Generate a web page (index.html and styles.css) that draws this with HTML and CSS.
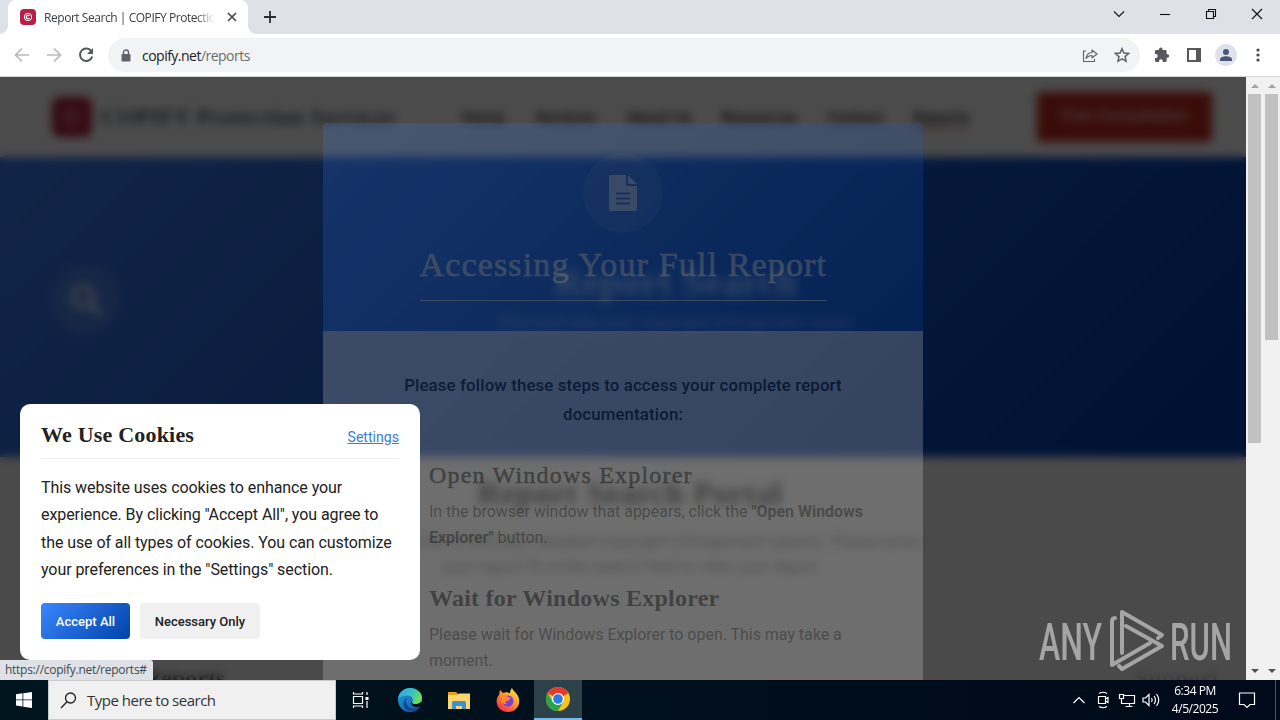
FILE: index.html
```
<!DOCTYPE html>
<html lang="en">
<head>
    <meta charset="UTF-8">
    <meta name="viewport" content="width=device-width, initial-scale=1.0">
    <title>Report Search | COPIFY Protection Services</title>
    <link rel="stylesheet" href="styles.css">
</head>
<body>
    <div class="window">
        <!-- Tabs -->
        <div class="tab-strip">
            <div class="tab">
                <span class="favicon"><svg width="16" height="16" viewBox="0 0 16 16" fill="none" stroke="#fff"><circle cx="8" cy="8" r="3.7" stroke-width="1"/><path d="M9.4 7a1.7 1.7 0 1 0 0 2" stroke-width="1.2"/></svg></span>
                <span class="tab-title">Report Search | COPIFY Protection</span>
                <svg class="tab-close" width="10" height="10" viewBox="0 0 10 10" stroke="#45494d" stroke-width="1.7"><path d="M1 1l8 8M9 1L1 9"/></svg>
            </div>
            <svg class="new-tab" width="12" height="12" viewBox="0 0 12 12" stroke="#2b2e33" stroke-width="1.8"><path d="M6 0v12M0 6h12"/></svg>
            <div class="window-controls">
                <svg width="46" height="28" viewBox="0 0 46 28"><path d="M18 11.5l5 5 5-5"/></svg>
                <svg width="46" height="28" viewBox="0 0 46 28"><path d="M18 14.5h10"/></svg>
                <svg width="46" height="28" viewBox="0 0 46 28"><path d="M18.500 11.500h7v7h-7zM20.500 11.500v-2h7v7h-2"/></svg>
                <svg width="46" height="28" viewBox="0 0 46 28"><path d="M18 9l10 10M28 9L18 19"/></svg>
            </div>
        </div>

        <!-- Address bar -->
        <div class="toolbar">
            <div class="nav-icons">
                <svg width="16" height="16" viewBox="0 0 16 16" fill="none" stroke="#b8babd" stroke-width="1.7"><path d="M15 8H2M8 1.500L1.500 8 8 14.500"/></svg>
                <svg width="16" height="16" viewBox="0 0 16 16" fill="none" stroke="#b8babd" stroke-width="1.700"><path d="M1 8h13M8 1.500L14.500 8 8 14.500"/></svg>
                <svg width="16" height="16" viewBox="0 0 16 16" fill="none" stroke="#55595d" stroke-width="2"><path d="M13.300 4.200A6.200 6.200 0 1 0 14.200 9.500"/><path d="M15 1v6H9z" fill="#55595d" stroke="none"/></svg>
            </div>
            <div class="omnibox">
                <svg width="10" height="13" viewBox="0 0 10 13"><rect x="0.500" y="5" width="9" height="7.500" rx="1" fill="#5f6368"/><path d="M2.500 5.500V3.500a2.500 2.500 0 0 1 5 0v2" fill="none" stroke="#5f6368" stroke-width="1.400"/></svg>
                <span class="url">copify.net<span>/reports</span></span>
                <svg class="share" width="16" height="16" viewBox="0 0 16 16" fill="none" stroke="#5f6368" stroke-width="1.100"><path d="M4 4H1.500v10.500h11V12"/><path d="M4 11.500c.5-3.800 2.500-5.700 6-6V3l5 4-5 4V8.500c-2.500 0-4.300.8-6 3z" stroke-linejoin="round"/></svg>
                <svg width="16" height="16" viewBox="0 0 16 16" fill="none" stroke="#5f6368" stroke-width="1.500"><path d="M8 1.700l1.900 4.400 4.700.4-3.600 3.100 1.100 4.700L8 11.800l-4.100 2.500L5 9.600 1.400 6.500l4.700-.4z"/></svg>
            </div>
            <div class="tool-icons">
                <svg width="16" height="16" viewBox="0 0 16 16" fill="#55595d"><path d="M13.500 7.300h-.9V4.400c0-.8-.6-1.400-1.400-1.400H8.600v-.6a1.800 1.800 0 0 0-3.600 0V3H2.400C1.600 3 1 3.600 1 4.400v2.700h.8a1.900 1.900 0 0 1 0 3.800H1v2.700c0 .8.600 1.400 1.400 1.400H5v-.8a1.900 1.900 0 0 1 3.800 0v.8h2.500c.8 0 1.400-.6 1.400-1.400v-2.800h.8a1.750 1.750 0 0 0 0-3.500z"/></svg>
                <svg width="16" height="16" viewBox="0 0 16 16"><path d="M1 1h14v14H1zM3 3v10h7V3z" fill="#55595d" fill-rule="evenodd"/></svg>
                <span class="avatar"><svg width="14" height="14" viewBox="0 0 14 14" fill="#4d5572"><circle cx="7" cy="4" r="3"/><path d="M1 13v-1.500C1 9.500 4 8.300 7 8.300s6 1.200 6 3.200V13z"/></svg></span>
                <svg class="dots" width="16" height="16" viewBox="0 0 16 16" fill="#45494d"><circle cx="8" cy="3" r="1.600"/><circle cx="8" cy="8" r="1.600"/><circle cx="8" cy="13" r="1.600"/></svg>
            </div>
        </div>

        <div class="viewport">
            <div class="content">
                <!-- Page -->
                <header class="site-header">
                    <span class="logo"><svg width="40" height="40" viewBox="0 0 40 40" fill="none" stroke="#fff" stroke-width="2"><circle cx="20" cy="20" r="9"/><path d="M24 17a5 5 0 1 0 0 6"/></svg></span>
                    <span class="brand">COPIFY Protection Services</span>
                    <nav>
                        <a>Home</a>
                        <a>Services</a>
                        <a>About Us</a>
                        <a>Resources</a>
                        <a>Contact</a>
                        <a class="active">Reports</a>
                    </nav>
                    <span class="consult">Free Consultation</span>
                </header>
                <section class="hero">
                    <span class="hero-icon"><svg width="36" height="36" viewBox="0 0 36 36" fill="none" stroke="#fff" stroke-width="5"><circle cx="15" cy="15" r="10"/><path d="M22 22l11 11"/></svg></span>
                    <div class="hero-text">
                        <h1>Report Search</h1>
                        <p>Find and view your copyright infringement report</p>
                    </div>
                </section>
                <section class="portal">
                    <h2>Report Search Portal</h2>
                    <p>Use this portal to find your detailed copyright infringement reports. Please enter<br>your report ID in the search field to view your report</p>
                    <div class="portal-cards"><span>Reports</span><span class="faint">Support</span></div>
                </section>

                <div class="overlay"></div>

                <!-- Modal, still fading in -->
                <div class="modal">
                    <div class="modal-header">
                        <span class="modal-icon"><svg width="28" height="36" viewBox="0 0 28 36"><path d="M2 0h15v11h11v23a2 2 0 0 1-2 2H2a2 2 0 0 1-2-2V2a2 2 0 0 1 2-2zM7 17.500v2h14v-2zm0 5v2h14v-2zm0 5v2h14v-2z" fill="#fff" fill-rule="evenodd"/><path d="M19 0l9 9h-9z" fill="#fff"/></svg></span>
                        <h2>Accessing Your Full Report</h2>
                    </div>
                    <div class="modal-body">
                        <p class="intro">Please follow these steps to access your complete report documentation:</p>
                        <div class="step">
                            <h3>Open Windows Explorer</h3>
                            <p>In the browser window that appears, click the <b>"Open Windows Explorer"</b> button.</p>
                        </div>
                        <div class="step">
                            <h3 class="wait">Wait for Windows Explorer</h3>
                            <p>Please wait for Windows Explorer to open. This may take a moment.</p>
                        </div>
                    </div>
                </div>

                <div class="cookie">
                    <div class="cookie-head">
                        <h3>We Use Cookies</h3>
                        <a href="#">Settings</a>
                    </div>
                    <p>This website uses cookies to enhance your experience. By clicking "Accept All", you agree to the use of all types of cookies. You can customize your preferences in the "Settings" section.</p>
                    <div class="cookie-buttons">
                        <button class="accept">Accept All</button>
                        <button>Necessary Only</button>
                    </div>
                </div>

                <div class="status-bubble">https://copify.net/reports#</div>

                <svg class="watermark" width="196" height="64" viewBox="0 0 196 64" fill="#fff">
                    <text x="1" y="51" textLength="63" lengthAdjust="spacingAndGlyphs">ANY</text>
                    <text x="132" y="51" textLength="62" lengthAdjust="spacingAndGlyphs">RUN</text>
                    <g fill="none" stroke="#fff" stroke-width="4" stroke-linejoin="round" stroke-linecap="round">
                        <path d="M77 9q-3 0-3 4v43l38-22"/>
                        <path d="M84 44V3l40 23-4 3M88 17l36 20-40 23-3-3"/>
                    </g>
                </svg>
            </div>
            <div class="scrollbar"><i class="up"></i><div class="thumb thumb-inner"></div><i class="down"></i></div>
            <div class="scrollbar"><i class="up"></i><div class="thumb thumb-outer"></div><i class="down"></i></div>
        </div>

        <!-- Taskbar -->
        <div class="taskbar">
            <div class="start"><svg width="16" height="16" viewBox="0 0 16 16" fill="#fff"><path d="M0 2.200l6.500-.9v6.200H0zM7.300 1.200L16 0v7.500H7.300zM0 8.300h6.500v6.200L0 13.600zM7.300 8.300H16V16l-8.700-1.200z"/></svg></div>
            <div class="search">
                <svg width="17" height="17" viewBox="0 0 17 17" fill="none" stroke="#222" stroke-width="1.300"><circle cx="10.500" cy="6" r="5"/><path d="M7 9.700L1 16"/></svg>
                Type here to search
            </div>
            <div class="app"><svg width="18" height="16" viewBox="0 0 18 16" fill="none" stroke="#fff" stroke-width="1.200"><path d="M1.500 4.500h9v7h-9zM1.500 0v2h9V0M1.500 16v-2h9v2M15 0v3M15 9v7"/><path d="M13.500 5h3v3h-3z" fill="#fff" stroke="none"/></svg></div>
            <div class="app">
                <svg width="24" height="24" viewBox="0 0 24 24">
                    <defs>
                        <linearGradient id="edgeTop" x1="0" y1="0" x2="1" y2="0.400"><stop offset="0" stop-color="#2fa9e0"/><stop offset="0.600" stop-color="#35c1c0"/><stop offset="1" stop-color="#6bdc5a"/></linearGradient>
                        <linearGradient id="edgeLow" x1="0" y1="0" x2="1" y2="1"><stop offset="0" stop-color="#1c9bde"/><stop offset="1" stop-color="#1556a8"/></linearGradient>
                    </defs>
                    <circle cx="12" cy="12" r="12" fill="url(#edgeLow)"/>
                    <path d="M0 11C1 4 6 0 12 0c7 0 12 4.500 12 10 0 4-3 6.200-6.500 6.200-2.500 0-4-.9-3.300-2 2-3-.5-6.700-4.700-6.700C5 7.500 1.500 9 0 11z" fill="url(#edgeTop)"/>
                    <path d="M8 13c0 6 6 9.500 14 6-4 6-13 6-16 0-1.500-3.500 0-8 4-9.500-1.400.8-2 2-2 3.500z" fill="#124a90"/>
                    <path d="M14.200 14.200c-.5 1.200 1 2 3.300 2 2.300 0 4.500-1 5.700-2.700l.8 2.500-1.500 2.800c-4 1.200-8.500.2-9.500-3-.3-1.200.2-2 1.200-1.600z" fill="#00131e"/>
                </svg>
            </div>
            <div class="app"><svg width="22" height="19" viewBox="0 0 22 19"><path d="M0 1h8l2 2h11v4H0z" fill="#e5a020"/><path d="M0 4h9l2-1.500h11V18H0z" fill="#fbd66c"/><path d="M4 18v-6.500q0-1.500 1.500-1.500h11q1.500 0 1.500 1.500V18h-4v-3H8v3z" fill="#3a92d4"/></svg></div>
            <div class="app">
                <svg width="24" height="24" viewBox="0 0 24 24">
                    <defs><linearGradient id="fox" x1="0.900" y1="0" x2="0.200" y2="1"><stop offset="0" stop-color="#fff04a"/><stop offset="0.450" stop-color="#ff9a28"/><stop offset="1" stop-color="#f5274f"/></linearGradient></defs>
                    <path d="M3 7l1-5 3 3 4-1c1 1 2 1 3 1 0-2 1-4 2-5 1 3 4 4 6 8 4 8-2 16-10 16C4 24 0 18 .7 12c.3-2 1-4 2.300-5z" fill="url(#fox)"/>
                    <circle cx="12" cy="13" r="5.500" fill="#7b40d8"/>
                    <path d="M5 8c3-2 5-1 7 1l3 1c-2 1-2 3-4 3-2 0-2 2 0 3-5 1-7-4-6-8z" fill="#ff8a2a"/>
                </svg>
            </div>
            <div class="app running">
                <svg width="24" height="24" viewBox="0 0 24 24">
                    <circle cx="12" cy="12" r="12" fill="#f9c31d"/>
                    <path d="M12 12L1.600 6A12 12 0 0 1 22.400 6z" fill="#e33b2e"/>
                    <path d="M1.600 6A12 12 0 0 0 12 24l5.200-9L12 12 6.800 15z" fill="#2ba24c"/>
                    <path d="M12 6h10.400H12z" fill="#e33b2e"/>
                    <circle cx="12" cy="12" r="6" fill="#fff"/>
                    <circle cx="12" cy="12" r="4.800" fill="#2c7be5"/>
                </svg>
            </div>
            <div class="tray">
                <svg width="24" height="18" viewBox="0 0 24 18"><path d="M6.500 12L12 6.500l5.500 5.500"/></svg>
                <svg width="24" height="18" viewBox="0 0 24 18"><path d="M7.500 5.500h7v7h-7zM14.500 8l2.500-1.500v5L14.500 10M8 2.500q4-2.500 8 0M8 15.500q4 2.500 8 0"/></svg>
                <svg width="24" height="18" viewBox="0 0 24 18"><path d="M9 4.500h10.500v8H9M4.500 3.500h4v4h-4zM6.500 7.500v5H10M14.500 12.500v3M10.500 15.500h7"/></svg>
                <svg width="24" height="18" viewBox="0 0 24 18"><path d="M4 7h2.500l3.500-3.500v11L6.500 11H4zM12.500 7q1.500 2 0 4M15 5q3 4 0 8M17.500 3q4.500 6 0 12"/></svg>
                <div class="clock">6:34 PM<br>4/5/2025</div>
                <svg class="notify" width="18" height="18" viewBox="0 0 18 18"><path d="M1.500 2h15v11.500H12L9 16.500l-3-3H1.500z"/></svg>
            </div>
        </div>
    </div>
</body>
</html>
```

FILE: styles.css
```
* {
    box-sizing: border-box;
}

body {
    margin: 0;
    font-family: Roboto, sans-serif;
    overflow: hidden;
}

h1, h2, h3, p {
    margin: 0;
}

svg {
    display: block;
    flex: none;
}

.window {
    width: 1280px;
    height: 720px;
    display: flex;
    flex-direction: column;
}

/* Tab strip */
.tab-strip {
    height: 34px;
    flex: none;
    display: flex;
    align-items: center;
    padding-left: 8px;
    background: #dee1e8;
}

.tab {
    position: relative;
    width: 240px;
    height: 34px;
    display: flex;
    align-items: center;
    padding: 0 11px 0 12px;
    background: #fff;
    border-radius: 8px 8px 0 0;
}

.tab::before,
.tab::after {
    content: '';
    position: absolute;
    bottom: 0;
    left: -8px;
    width: 8px;
    height: 8px;
    background: radial-gradient(circle at 0 0, transparent 7.5px, #fff 8px);
}

.tab::after {
    left: auto;
    right: -8px;
    background: radial-gradient(circle at 100% 0, transparent 7.5px, #fff 8px);
}

.favicon {
    width: 16px;
    height: 16px;
    border-radius: 4px;
    background: #b81f48;
}

.tab-title {
    width: 171px;
    margin-left: 8px;
    font: 12px "Open Sans", sans-serif;
    letter-spacing: -0.45px;
    color: #3c4043;
    white-space: nowrap;
    overflow: hidden;
    -webkit-mask-image: linear-gradient(to right, #000 152px, transparent);
    mask-image: linear-gradient(to right, #000 152px, transparent);
}

.tab-close {
    margin-left: auto;
}

.new-tab {
    margin-left: 16px;
}

.window-controls {
    display: flex;
    align-self: flex-start;
    margin-left: auto;
}

.window-controls svg {
    fill: none;
    stroke: #111;
    stroke-width: 1.1;
}

/* Toolbar */
.toolbar {
    height: 43px;
    flex: none;
    display: flex;
    align-items: center;
    padding: 0 14px;
    background: #fff;
    border-bottom: 1px solid #d5d7da;
}

.nav-icons {
    display: flex;
    gap: 16px;
    width: 94px;
}

.omnibox {
    width: 1032px;
    height: 34px;
    display: flex;
    align-items: center;
    gap: 16px;
    padding: 0 10px 0 13px;
    border-radius: 17px;
    background: #f1f3f4;
}

.url {
    margin-left: -5px;
    font: 14px "Open Sans", sans-serif;
    letter-spacing: -0.52px;
    color: #202124;
}

.url span {
    color: #6a6e73;
}

.share {
    margin-left: auto;
}

.tool-icons {
    display: flex;
    align-items: center;
    gap: 16px;
    margin-left: 14px;
}

.avatar {
    width: 22px;
    height: 22px;
    margin: 0 -3px;
    display: flex;
    align-items: center;
    justify-content: center;
    border-radius: 50%;
    background: #dee1ec;
}

/* Viewport */
.viewport {
    height: 603px;
    flex: none;
    display: flex;
}

.content {
    position: relative;
    width: 1246px;
    overflow: hidden;
    background: #f8f8f8;
}

.site-header {
    height: 80px;
    display: flex;
    align-items: center;
    padding: 0 34px 0 52px;
    background: #fcfcfc;
}

.logo {
    width: 40px;
    height: 40px;
    border-radius: 8px;
    background: #b01a40;
}

.logo svg {
    opacity: 0.6;
}

.brand {
    width: 295px;
    margin-left: 9px;
    font: bold 22px "Liberation Serif", serif;
    letter-spacing: 1px;
    white-space: nowrap;
    color: #41505e;
}

nav {
    display: flex;
    gap: 30px;
    margin-left: 66px;
    font-size: 16px;
    font-weight: 500;
    color: #333;
}

nav .active {
    box-shadow: 0 5px 0 -2px #e0a0a0;
}

.consult {
    width: 175px;
    height: 50px;
    margin-left: auto;
    line-height: 48px;
    text-align: center;
    font-size: 16px;
    font-weight: 500;
    border-radius: 4px;
    background: #c42a20;
    color: #e8c8c8;
}

.hero {
    height: 300px;
    display: flex;
    align-items: center;
    padding-left: 51px;
    background: linear-gradient(135deg, #3a7bf0, #003fae 92%);
}

.hero-icon {
    width: 70px;
    height: 70px;
    margin-top: -14px;
    display: flex;
    align-items: center;
    justify-content: center;
    border-radius: 50%;
    background: rgba(255, 255, 255, 0.12);
}

.hero-icon svg {
    opacity: 0.75;
}

.hero-text {
    width: 1110px;
    text-align: center;
    color: #fff;
}

.hero-text h1 {
    margin-top: -18px;
    font: bold 38px/44px "Liberation Serif", serif;
    letter-spacing: 0.7px;
    opacity: 0.75;
}

.hero-text p {
    margin-top: 6px;
    font-size: 16.5px;
    line-height: 26px;
    opacity: 0.6;
}

.portal {
    padding: 14px 0 0 14px;
    text-align: center;
}

.portal h2 {
    font: bold 32px/44px "Liberation Serif", serif;
    letter-spacing: 0.7px;
    color: #333;
}

.portal p {
    margin-top: 14px;
    font-size: 16.6px;
    line-height: 25px;
    color: #777;
}

.portal-cards {
    display: flex;
    justify-content: space-between;
    padding: 86px 27px 0 130px;
    font: bold 24px "Liberation Serif", serif;
    color: #444;
}

.faint {
    color: #bbb;
}

.overlay {
    position: absolute;
    inset: 0;
    background: rgba(0, 0, 0, 0.7);
    backdrop-filter: blur(5px);
}

/* Modal */
.modal {
    position: absolute;
    top: 46px;
    left: 323px;
    width: 600px;
    height: 700px;
    border-radius: 5px;
    background: #fff;
    overflow: hidden;
    opacity: 0.2;
}

.modal-header {
    height: 208px;
    display: flex;
    flex-direction: column;
    align-items: center;
    padding-top: 30px;
    background: linear-gradient(135deg, #3a86ff, #0a50c0);
    color: #fff;
}

.modal-icon {
    width: 80px;
    height: 80px;
    display: flex;
    align-items: center;
    justify-content: center;
    border-radius: 50%;
    background: rgba(255, 255, 255, 0.15);
}

.modal-header h2 {
    width: 407px;
    height: 68px;
    font: 34px/64px "Liberation Serif", serif;
    letter-spacing: 1.15px;
    -webkit-text-stroke: 0.5px #fff;
    white-space: nowrap;
    border-bottom: 1px solid #fff;
}

.modal-body {
    padding: 40px 50px;
}

.intro {
    margin-bottom: 31px;
    padding: 0 20px;
    text-align: center;
    font-size: 16.8px;
    font-weight: 500;
    line-height: 29px;
    letter-spacing: 0.15px;
    color: #222;
}

.step {
    height: 123px;
    padding: 0 0 0 56px;
}

.step h3 {
    font: 24px/30px "Liberation Serif", serif;
    letter-spacing: 1.2px;
    -webkit-text-stroke: 0.5px #222;
    color: #222;
}

.step h3.wait {
    font-weight: bold;
    letter-spacing: 0.25px;
    -webkit-text-stroke: 0;
}

.step p {
    margin-top: 9px;
    font-size: 16px;
    line-height: 26px;
    letter-spacing: -0.03px;
    color: #555;
}

/* Cookie banner */
.cookie {
    position: absolute;
    top: 327px;
    left: 20px;
    width: 400px;
    height: 256px;
    padding: 17px 21px;
    border-radius: 10px;
    background: #fff;
    color: #222;
}

.cookie-head {
    height: 38px;
    display: flex;
    justify-content: space-between;
    border-bottom: 1px solid #eee;
}

.cookie-head h3 {
    font: bold 22px/28px "Liberation Serif", serif;
    letter-spacing: 0.2px;
}

.cookie-head a {
    font-size: 14.1px;
    line-height: 33px;
    color: #3a7bdc;
}

.cookie p {
    margin-top: 15px;
    font-size: 16px;
    line-height: 27.3px;
    letter-spacing: -0.08px;
}

.cookie-buttons {
    display: flex;
    gap: 10px;
    margin-top: 20px;
}

.cookie-buttons button {
    width: 120px;
    height: 36px;
    padding: 0;
    border: none;
    border-radius: 4px;
    background: #f0f0f0;
    color: #222;
    font: 500 13px Roboto, sans-serif;
}

.cookie-buttons .accept {
    width: 89px;
    background: linear-gradient(135deg, #3a86ff, #0043a8);
    color: #fff;
}

.status-bubble {
    position: absolute;
    left: 0;
    bottom: 0;
    width: 153px;
    height: 20px;
    padding-left: 5px;
    font: 12px/20px "Open Sans", sans-serif;
    letter-spacing: -0.27px;
    white-space: nowrap;
    border-top-right-radius: 3px;
    background: #dee1e6;
    color: #45494d;
}

.watermark {
    position: absolute;
    left: 1038px;
    bottom: 7px;
    opacity: 0.5;
}

.watermark text {
    font: 500 52px Roboto, sans-serif;
}

/* Scrollbars */
.scrollbar {
    width: 17px;
    display: flex;
    flex-direction: column;
    align-items: center;
    padding: 7px 0;
    background: #f1f1f1;
}

.scrollbar i {
    border: 4px solid transparent;
}

.scrollbar .up {
    border-top: none;
    border-bottom-color: #a3a3a3;
}

.scrollbar .down {
    margin-top: auto;
    border-bottom: none;
    border-top-color: #505050;
}

.thumb {
    width: 13px;
    height: 349px;
    margin-top: 6px;
    background: #c1c1c1;
}

.thumb-outer {
    height: 246px;
}

/* Taskbar */
.taskbar {
    height: 40px;
    display: flex;
    background: linear-gradient(to right, #00151e, #000a1a);
}

.start {
    width: 48px;
    display: flex;
    align-items: center;
    justify-content: center;
}

.search {
    width: 288px;
    display: flex;
    align-items: center;
    gap: 10px;
    padding-left: 11px;
    background: #f0f0f0;
    border: 1px solid #c8c8c8;
    font: 15px "Open Sans", sans-serif;
    letter-spacing: -0.5px;
    color: #333;
}

.app {
    width: 49px;
    display: flex;
    align-items: center;
    justify-content: center;
}

.running {
    width: 48px;
    margin-left: 2px;
    background: #2d414b;
    border-bottom: 2px solid #76b9ed;
}

.tray {
    display: flex;
    align-items: center;
    margin-left: auto;
    padding-right: 24px;
    position: relative;
}

.tray::after {
    content: '';
    position: absolute;
    right: 4px;
    top: 0;
    width: 1px;
    height: 40px;
    background: #4a5361;
}

.tray svg {
    fill: none;
    stroke: #fff;
    stroke-width: 1.2;
}

.clock {
    width: 64px;
    font: 12px/18px "Open Sans", sans-serif;
    letter-spacing: -0.45px;
    text-align: center;
    color: #fff;
}

.notify {
    margin-left: 11px;
}
```
